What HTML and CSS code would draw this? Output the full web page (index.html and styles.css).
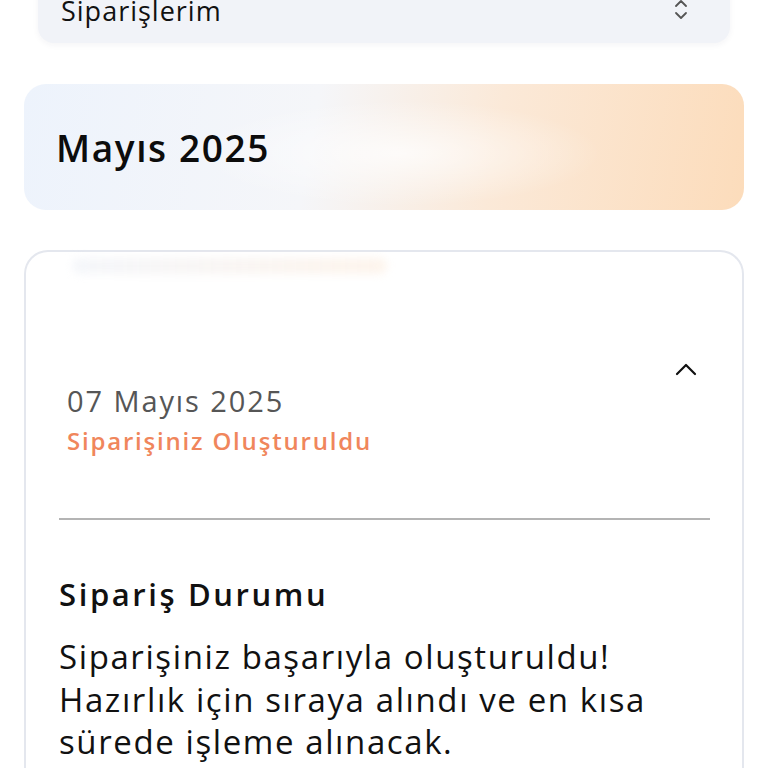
FILE: index.html
```html
<!DOCTYPE html>
<html lang="tr">
<head>
<meta charset="utf-8">
<link rel="stylesheet" href="styles.css">
</head>
<body>
<div class="page">
  <div class="select">
    <span class="select-label">Siparişlerim</span>
    <svg class="updown" width="16" height="24" viewBox="0 0 16 24"><path d="M3 6 L8 1 L13 6" fill="none" stroke="#555" stroke-width="1.8" stroke-linecap="round" stroke-linejoin="round"/><path d="M3 13 L8 18 L13 13" fill="none" stroke="#555" stroke-width="1.8" stroke-linecap="round" stroke-linejoin="round"/></svg>
  </div>
  <div class="month">
    <h1 class="month-title">Mayıs 2025</h1>
  </div>
  <div class="card">
    <div class="ghost"></div>
    <div class="card-head">
      <div class="head-text">
        <div class="date">07 Mayıs 2025</div>
        <div class="status">Siparişiniz Oluşturuldu</div>
      </div>
      <svg class="chev" width="22" height="14" viewBox="0 0 22 14"><path d="M2 11 L11 2 L20 11" fill="none" stroke="#111" stroke-width="2.2" stroke-linecap="round" stroke-linejoin="round"/></svg>
    </div>
    <hr class="divider">
    <div class="card-body">
      <h2 class="body-title">Sipariş Durumu</h2>
      <p class="body-text">Siparişiniz başarıyla oluşturuldu!<br>Hazırlık için sıraya alındı ve en kısa<br>sürede işleme alınacak.</p>
    </div>
  </div>
</div>
</body>
</html>
```
FILE: styles.css
```css
html, body {
  margin: 0;
  padding: 0;
  background: #ffffff;
}
body {
  font-family: "Open Sans", "Noto Sans", sans-serif;
  color: #111;
  overflow: hidden;
  height: 768px;
}
.page {
  padding: 0 24px;
  display: flex;
  flex-direction: column;
}
.select {
  margin: -20px 14px 0;
  height: 63px;
  background: #f1f3f8;
  border-radius: 0 0 16px 16px;
  box-shadow: 0 2px 6px rgba(30, 40, 80, 0.05);
  display: flex;
  align-items: flex-start;
  justify-content: space-between;
  padding: 0 41px 0 23px;
  box-sizing: border-box;
}
.select-label {
  font-size: 27px;
  line-height: 30px;
  margin-top: 16px;
  letter-spacing: 1px;
  color: #111;
}
.updown {
  margin-top: 20px;
}
.month {
  margin-top: 41px;
  height: 126px;
  border-radius: 22px;
  background:
    radial-gradient(ellipse 40% 60% at 52% 55%, rgba(255,255,255,0.75), rgba(255,255,255,0) 70%),
    linear-gradient(100deg, #edf3fc 0%, #f5f6f9 40%, #fbe9d8 65%, #fcdcbb 100%);
  display: flex;
  align-items: center;
  padding: 0 32px;
}
.month-title {
  margin: 0;
  font-size: 37px;
  font-weight: 600;
  color: #0c0c0c;
  letter-spacing: 1.6px;
}
.card {
  margin-top: 40px;
  border: 2px solid #e4e7ee;
  border-bottom: none;
  border-radius: 24px 24px 0 0;
  padding: 0 32px 0 33px;
  position: relative;
  height: 540px;
}
.ghost {
  position: absolute;
  left: 46px;
  top: 6px;
  width: 315px;
  height: 16px;
  border-radius: 8px;
  background: linear-gradient(90deg, rgba(238,241,247,0.6), rgba(253,240,228,0.7));
  filter: blur(4px);
}
.card-head {
  display: flex;
  justify-content: space-between;
  align-items: flex-start;
  padding-top: 130px;
  padding-right: 13px;
}
.chev {
  margin-top: -19px;
}
.date {
  font-size: 29px;
  color: #565656;
  line-height: 38px;
  letter-spacing: 1.9px;
  margin-left: 8px;
}
.status {
  font-size: 24px;
  font-weight: 600;
  color: #f0865c;
  line-height: 36px;
  letter-spacing: 1.8px;
  margin-left: 8px;
  margin-top: 3px;
}
.divider {
  margin: 59px 0 0;
  border: none;
  border-top: 2px solid #b4b4b4;
}
.body-title {
  margin: 54px 0 0;
  font-size: 31px;
  font-weight: 600;
  line-height: 40px;
  letter-spacing: 2.6px;
}
.body-text {
  margin: 22px 0 0;
  font-size: 33px;
  line-height: 42.5px;
  letter-spacing: 1.6px;
}
```
